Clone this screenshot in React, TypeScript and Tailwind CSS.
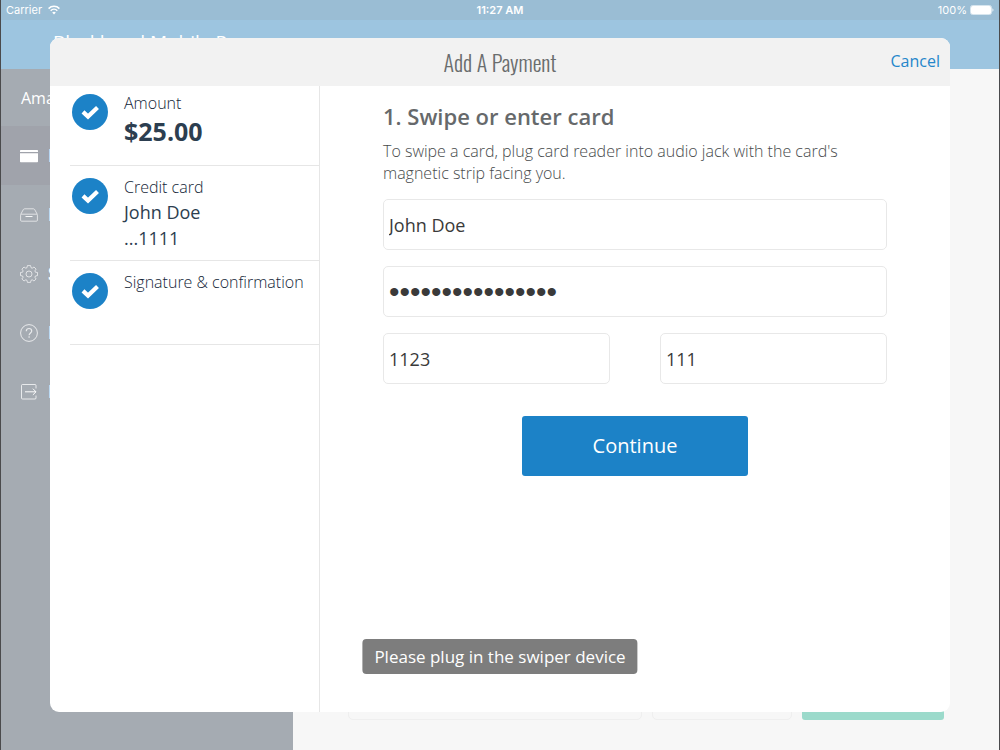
import type { ReactNode } from "react";

function WifiIcon() {
  return (
    <svg width="12" height="10" viewBox="0 0 12 10" aria-hidden="true">
      <g fill="none" stroke="#fff" strokeWidth="1.5">
        <path d="M0.6 3.6a7.6 7.6 0 0 1 10.8 0" />
        <path d="M2.7 5.7a4.7 4.7 0 0 1 6.6 0" />
      </g>
      <path d="M6 9.4 4.2 7.5a2.6 2.6 0 0 1 3.6 0z" fill="#fff" />
    </svg>
  );
}

function BatteryIcon() {
  return (
    <svg width="24" height="10" viewBox="0 0 24 10" aria-hidden="true">
      <rect x="0.5" y="0.5" width="21" height="9" rx="2" fill="none" stroke="#fff" strokeOpacity="0.6" />
      <rect x="1" y="1" width="20" height="8" rx="1.5" fill="#fff" />
      <path d="M22.5 3.3c1.2.5 1.2 2.9 0 3.4z" fill="#fff" />
    </svg>
  );
}

function CardIcon() {
  return (
    <svg width="18" height="18" viewBox="0 0 18 18" aria-hidden="true">
      <path d="M0 3.7a.7.7 0 0 1 .7-.7h16.600a.7.7 0 0 1 .7.7V5H0zM0 6.200h18v8.400a.7.7 0 0 1-.7.7H.7a.7.7 0 0 1-.7-.7z" fill="#fff" />
    </svg>
  );
}

function TrayIcon() {
  return (
    <svg width="18" height="18" viewBox="0 0 18 18" fill="none" stroke="#fff" strokeOpacity="0.65" aria-hidden="true">
      <path d="M.7 8.300 3.300 3.600a1.600 1.600 0 0 1 1.300-.8h8.800c.6 0 1 .3 1.300.8l2.600 4.700" />
      <rect x=".6" y="8.200" width="16.800" height="7" rx="1" />
      <path d="M5.500 10.500h7" strokeOpacity="0.9" />
    </svg>
  );
}

function GearIcon() {
  return (
    <svg width="18" height="18" viewBox="0 0 18 18" fill="none" stroke="#fff" strokeOpacity="0.65" aria-hidden="true">
      <circle cx="9" cy="9" r="3" />
      <path
        strokeLinejoin="round"
        d="M7.4.6h3.2l.4 2.1 1.2.5L14 2l2.1 2.1-1.2 1.8.5 1.3 2.1.3v3.1l-2.1.4-.5 1.2 1.2 1.8L14 16l-1.8-1.2-1.2.5-.4 2.1H7.4L7 15.3l-1.2-.5L4 16l-2.1-2 1.2-1.8-.5-1.2-2.1-.4V7.5l2.1-.3.5-1.3-1.2-1.8L4 2l1.8 1.2L7 2.7z"
      />
    </svg>
  );
}

function HelpIcon() {
  return (
    <svg width="18" height="18" viewBox="0 0 18 18" fill="none" stroke="#fff" strokeOpacity="0.75" aria-hidden="true">
      <circle cx="9" cy="9" r="8.4" />
      <path
        strokeWidth="1.2"
        d="M6.300 7.200c0-1.700 1.100-2.700 2.700-2.700s2.700 1 2.700 2.400c0 2-2.600 2.100-2.600 4.400M9.100 12.300v1.500"
      />
    </svg>
  );
}

function ExitIcon() {
  return (
    <svg width="18" height="18" viewBox="0 0 18 18" fill="none" stroke="#fff" strokeOpacity="0.75" aria-hidden="true">
      <path d="M16 5.500V2.500a1 1 0 0 0-1-1H2.500a1 1 0 0 0-1 1v12.500a1 1 0 0 0 1 1H15a1 1 0 0 0 1-1v-2.500" />
      <path d="M5 8.800h11M12.900 5.700 16 8.800l-3.100 3.100" strokeOpacity="0.95" />
    </svg>
  );
}

function CheckBadge() {
  return (
    <svg width="36" height="36" viewBox="0 0 36 36" className="shrink-0" aria-hidden="true">
      <circle cx="18" cy="18" r="18" fill="#1c82c7" />
      <path d="M11 17.900 16 22.600 25.500 13.500" fill="none" stroke="#fff" strokeWidth="4.200" />
    </svg>
  );
}

const menu: { label: string; icon: ReactNode; active?: boolean }[] = [
  { label: "Payments", icon: <CardIcon />, active: true },
  { label: "History", icon: <TrayIcon /> },
  { label: "Settings", icon: <GearIcon /> },
  { label: "Help", icon: <HelpIcon /> },
  { label: "Logout", icon: <ExitIcon /> },
];

function Step({ title, className, children }: { title: string; className: string; children?: ReactNode }) {
  return (
    <li className={`flex gap-4 border-b border-[#e6e6e6] pl-0.5 ${className}`}>
      <CheckBadge />
      <div className="text-[#2c3e50]">
        <h3 className="mb-[3px] text-[16px] leading-[18px] font-light whitespace-nowrap text-[#142638]">{title}</h3>
        {children}
      </div>
    </li>
  );
}

const field =
  "h-[51px] w-full min-w-0 rounded-[5px] border border-[#e8e8e8] bg-white px-[5px] text-[#3a3a3a] outline-none";

export default function App() {
  return (
    <div className="relative font-['Open_Sans',sans-serif]">
      <div className="flex min-h-screen flex-col border-x border-[#4a4a4c] bg-[#f7f7f7]">
        <div className="grid h-5 grid-cols-3 items-center bg-[#9abdd4] px-[5px] font-['Inter',sans-serif] text-[11px] text-white">
          <span className="flex items-center gap-1.5">
            Carrier <WifiIcon />
          </span>
          <span className="text-center font-semibold">11:27 AM</span>
          <span className="flex items-center justify-end gap-[3px]">
            100% <BatteryIcon />
          </span>
        </div>
        <header className="flex h-[49px] items-start bg-[#9dc5e0] pt-2.5 pl-13 text-white">
          <h1 className="text-[19px] leading-6">Blackbaud Mobile Pay</h1>
        </header>
        <div className="flex flex-1">
          <nav className="w-[292px] shrink-0 bg-[#a5abb2] text-white">
            <p className="flex h-[57px] items-center pl-5 text-[16px]">Amanda</p>
            <ul>
              {menu.map((m) => (
                <li key={m.label}>
                  <a
                    href="#"
                    className={`flex h-[59px] items-center gap-2.5 pl-[19px] text-[17px] font-bold ${m.active ? "bg-[#a0a3ab]" : ""}`}
                  >
                    {m.icon}
                    {m.label}
                  </a>
                </li>
              ))}
            </ul>
          </nav>
          <main className="grid flex-1 grid-cols-[293fr_140fr_142fr] items-end gap-2.5 px-[55px] pb-[30px]">
            <div className="h-16 rounded-[5px] border border-[#efefef]" />
            <div className="h-16 rounded-[5px] border border-[#efefef]" />
            <div className="h-16 rounded-[3px] bg-[#9bdacb]" />
          </main>
        </div>
      </div>

      <div className="absolute inset-0 flex px-[5%] py-[38px]">
        <section
          role="dialog"
          aria-labelledby="dialog-title"
          className="flex flex-1 flex-col overflow-hidden rounded-[9px] bg-white"
        >
          <header className="grid h-12 shrink-0 grid-cols-[1fr_auto_1fr] items-center bg-[#f2f2f2] px-2.5">
            <h2
              id="dialog-title"
              className="col-start-2 font-['Oswald','Liberation_Sans_Narrow',sans-serif] text-[22px] font-light text-[#6a6d6e]"
            >
              Add A Payment
            </h2>
            <button type="button" className="justify-self-end pb-[3px] text-[16px] text-[#2587cb]">
              Cancel
            </button>
          </header>
          <div className="flex flex-1">
            <aside className="w-[30%] shrink-0 border-r border-[#e6e6e6]">
              <ol className="pl-5">
                <Step title="Amount" className="min-h-20 pt-2">
                  <p className="text-[25px] leading-8 font-bold">$25.00</p>
                </Step>
                <Step title="Credit card" className="min-h-[95px] pt-3">
                  <p className="text-[18px] leading-[26px]">John Doe</p>
                  <p className="text-[18px] leading-[26px]">...1111</p>
                </Step>
                <Step title="Signature &amp; confirmation" className="min-h-21 pt-3" />
              </ol>
            </aside>
            <form className="flex-1 px-[7%] pt-[15px]" onSubmit={(e) => e.preventDefault()}>
              <h3 className="text-[22px] leading-[30px] font-[650] text-[#66696b]">1. Swipe or enter card</h3>
              <p className="mt-[9px] text-[16px] leading-[22px] font-light text-[#484b4c]">
                To swipe a card, plug card reader into audio jack with the card's magnetic strip facing you.
              </p>
              <div className="mt-[15px] grid grid-cols-2 gap-x-[50px] gap-y-4">
                <input aria-label="Name on card" defaultValue="John Doe" className={`${field} col-span-2 text-[18px]`} />
                <input
                  aria-label="Card number"
                  type="password"
                  defaultValue="4111111111111111"
                  className={`${field} col-span-2 font-['Liberation_Sans',sans-serif] text-[30px]`}
                />
                <input aria-label="Expiration date" defaultValue="1123" className={`${field} text-[18px]`} />
                <input aria-label="Security code" defaultValue="111" className={`${field} text-[18px]`} />
              </div>
              <button
                type="submit"
                className="mx-auto mt-8 block h-[60px] w-[45%] rounded-[3px] bg-[#1c82c7] text-[20px] text-white"
              >
                Continue
              </button>
            </form>
          </div>
        </section>
      </div>

      <div
        role="status"
        className="absolute bottom-[76px] left-1/2 flex h-[35px] -translate-x-1/2 items-center rounded-[4px] bg-[#7d7d7d] px-3 text-[17px] whitespace-nowrap text-white"
      >
        Please plug in the swiper device
      </div>
    </div>
  );
}
